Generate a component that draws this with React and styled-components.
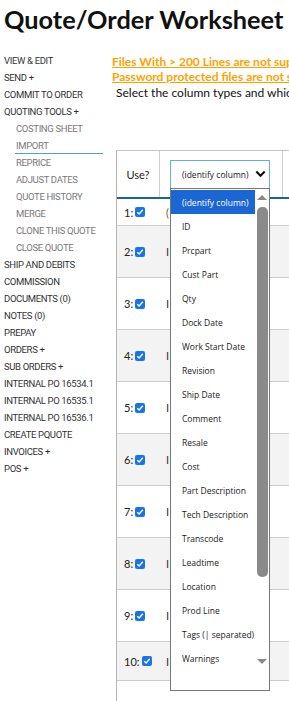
import React from 'react';
import styled, { createGlobalStyle } from 'styled-components';

const GlobalStyle = createGlobalStyle`
  html, body {
    margin: 0;
    padding: 0;
    overflow: hidden;
    background: #fff;
  }
  body {
    font-family: 'Lato', 'Noto Sans', sans-serif;
    color: #111;
  }
`;

const Page = styled.div`
  width: 289px;
  height: 701px;
  overflow: hidden;
`;

const Title = styled.h1`
  margin: 0;
  padding: 3px 0 0 4px;
  height: 49px;
  box-sizing: border-box;
  font-family: 'Lato', sans-serif;
  font-weight: 700;
  font-size: 25.3px;
  line-height: 32px;
  white-space: nowrap;
  color: #111;
`;

const Body = styled.div`
  display: flex;
`;

const Sidebar = styled.nav`
  width: 112px;
  flex-shrink: 0;
  display: flex;
  flex-direction: column;
  padding-top: 3px;
`;

const NavItem = styled.div`
  height: 17px;
  line-height: 17px;
  padding-left: ${({ $sub }) => ($sub ? '16px' : '4px')};
  font-family: 'Roboto', sans-serif;
  font-size: 9.5px;
  letter-spacing: -0.35px;
  text-transform: uppercase;
  white-space: nowrap;
  color: ${({ $sub }) => ($sub ? '#7a7a7a' : '#333')};
  ${({ $underline }) => $underline && `
    box-shadow: inset 0 -1px 0 #5d9fb3;
    margin-right: 9px;
    margin-left: 15px;
    padding-left: 1px;
  `}
`;

const Main = styled.div`
  flex: 1;
  min-width: 0;
  display: flex;
  flex-direction: column;
  padding-top: 5px;
`;

const Warning = styled.a`
  display: block;
  height: 15px;
  line-height: 15px;
  font-family: 'Lato', sans-serif;
  font-weight: 700;
  font-size: 12px;
  color: #ffa200;
  text-decoration: underline;
  white-space: nowrap;
`;

const Hint = styled.div`
  height: 16px;
  line-height: 17px;
  padding-left: 4px;
  font-size: 12px;
  color: #111;
  white-space: nowrap;
`;

const TableWrap = styled.div`
  position: relative;
  margin: 50px 0 0 4px;
  width: 400px;
  height: 560px;
  border-left: 1px solid #b5b5b5;
`;

const HeaderRow = styled.div`
  display: flex;
  height: 49px;
  border-top: 1px solid #c4c4c4;
  border-bottom: 2px solid #17698a;
  box-sizing: border-box;
`;

const HeadCell = styled.div`
  width: ${({ $w }) => $w}px;
  flex-shrink: 0;
  display: flex;
  align-items: center;
  justify-content: ${({ $center }) => ($center ? 'center' : 'flex-start')};
  padding-left: ${({ $pad }) => $pad || 0}px;
  box-sizing: border-box;
  border-right: 1px solid #cfcfcf;
  font-size: 11px;
  color: #222;
`;

const SelectBox = styled.div`
  width: 100px;
  flex-shrink: 0;
  height: 29px;
  box-sizing: border-box;
  border: 1px solid #5db7c9;
  display: flex;
  align-items: center;
  justify-content: space-between;
  padding: 0 3px 0 11px;
  font-family: 'Open Sans', sans-serif;
  font-size: 8.5px;
  color: #222;
`;

const Row = styled.div`
  display: flex;
  align-items: center;
  height: ${({ $h }) => $h}px;
  box-sizing: border-box;
  border-bottom: 1px solid #cdcdcd;
  background: ${({ $alt }) => ($alt ? '#f3f3f3' : '#fff')};
`;

const RowLabel = styled.div`
  width: 43px;
  flex-shrink: 0;
  display: flex;
  align-items: center;
  padding-left: 7px;
  box-sizing: border-box;
  font-size: 11px;
  color: #222;
`;

const Check = styled.span`
  width: 10px;
  height: 10px;
  margin-left: 2px;
  border-radius: 2px;
  background: #1a73e8;
  display: inline-flex;
  align-items: center;
  justify-content: center;
`;

const CellText = styled.div`
  padding-left: 6px;
  font-size: 11px;
  color: ${({ $first }) => ($first ? '#8a5418' : '#333')};
`;

const Dropdown = styled.div`
  position: absolute;
  left: 53px;
  top: 38px;
  width: 100px;
  height: 503px;
  box-sizing: border-box;
  border: 1px solid #777;
  background: #fff;
  overflow: hidden;
  padding-top: 1px;
`;

const Option = styled.div`
  height: 24px;
  line-height: 26px;
  margin-right: 14px;
  padding-left: 11px;
  font-family: 'Open Sans', sans-serif;
  font-size: 8.5px;
  white-space: nowrap;
  color: ${({ $active }) => ($active ? '#fff' : '#222')};
  background: ${({ $active }) => ($active ? '#1b66d2' : 'transparent')};
`;

const ScrollTrack = styled.div`
  position: absolute;
  right: 0;
  top: 0;
  bottom: 0;
  width: 14px;
  background: #fff;
  display: flex;
  flex-direction: column;
  align-items: center;
`;

const Arrow = styled.div`
  width: 0;
  height: 0;
  border-left: 5px solid transparent;
  border-right: 5px solid transparent;
  ${({ $down }) => ($down ? 'border-top: 5px solid #8a8a8a;' : 'border-bottom: 5px solid #8a8a8a;')}
  margin: ${({ $down }) => ($down ? '0 0 26px' : '6px 0 0')};
`;

const Thumb = styled.div`
  width: 11px;
  height: 370px;
  margin-top: 7px;
  border-radius: 5px;
  background: #8a8a8a;
  flex-shrink: 0;
`;

const Spacer = styled.div`
  flex: 1;
`;

const navItems = [
  ['View & Edit'], ['Send +'], ['Commit to Order'], ['Quoting Tools +'],
  ['Costing Sheet', 1], ['Import', 1, 1], ['Reprice', 1], ['Adjust Dates', 1],
  ['Quote History', 1], ['Merge', 1], ['Clone This Quote', 1], ['Close Quote', 1],
  ['Ship and Debits'], ['Commission'], ['Documents (0)'], ['Notes (0)'],
  ['Prepay'], ['Orders +'], ['Sub Orders +'], ['Internal PO 16534.1'],
  ['Internal PO 16535.1'], ['Internal PO 16536.1'], ['Create PQuote'],
  ['Invoices +'], ['POS +'],
];

const options = [
  '(identify column)', 'ID', 'Prcpart', 'Cust Part', 'Qty', 'Dock Date',
  'Work Start Date', 'Revision', 'Ship Date', 'Comment', 'Resale', 'Cost',
  'Part Description', 'Tech Description', 'Transcode', 'Leadtime', 'Location',
  'Prod Line', 'Tags (| separated)', 'Warnings',
];

const rowHeights = [27, 52, 52, 52, 52, 52, 52, 52, 52, 39];

const CheckMark = () => (
  <svg width="8" height="8" viewBox="0 0 8 8">
    <path d="M1.3 4.2 L3.2 6 L6.8 1.8" fill="none" stroke="#fff" strokeWidth="1.4" />
  </svg>
);

const Chevron = () => (
  <svg width="11" height="8" viewBox="0 0 11 8">
    <path d="M1.3 1.5 L5.5 5.7 L9.7 1.5" fill="none" stroke="#111" strokeWidth="2.2" />
  </svg>
);

export default function App() {
  return (
    <Page>
      <GlobalStyle />
      <Title>Quote/Order Worksheet</Title>
      <Body>
        <Sidebar>
          {navItems.map(([label, sub, underline]) => (
            <NavItem key={label} $sub={!!sub} $underline={!!underline}>{label}</NavItem>
          ))}
        </Sidebar>
        <Main>
          <Warning>Files With &gt; 200 Lines are not supported</Warning>
          <Warning>Password protected files are not supported</Warning>
          <Hint>Select the column types and which rows to import</Hint>
          <TableWrap>
            <HeaderRow>
              <HeadCell $w={43} $center>Use?</HeadCell>
              <HeadCell $w={123} $pad={10}>
                <SelectBox>
                  <span>(identify column)</span>
                  <Chevron />
                </SelectBox>
              </HeadCell>
              <HeadCell $w={120} />
            </HeaderRow>
            {rowHeights.map((h, i) => (
              <Row key={i} $h={h} $alt={i % 2 === 1}>
                <RowLabel>
                  {i + 1}:<Check><CheckMark /></Check>
                </RowLabel>
                <CellText $first={i === 0}>{i === 0 ? '(' : 'I'}</CellText>
              </Row>
            ))}
            <Dropdown>
              {options.map((o, i) => (
                <Option key={o} $active={i === 0}>{o}</Option>
              ))}
              <ScrollTrack>
                <Arrow />
                <Thumb />
                <Spacer />
                <Arrow $down />
              </ScrollTrack>
            </Dropdown>
          </TableWrap>
        </Main>
      </Body>
    </Page>
  );
}
